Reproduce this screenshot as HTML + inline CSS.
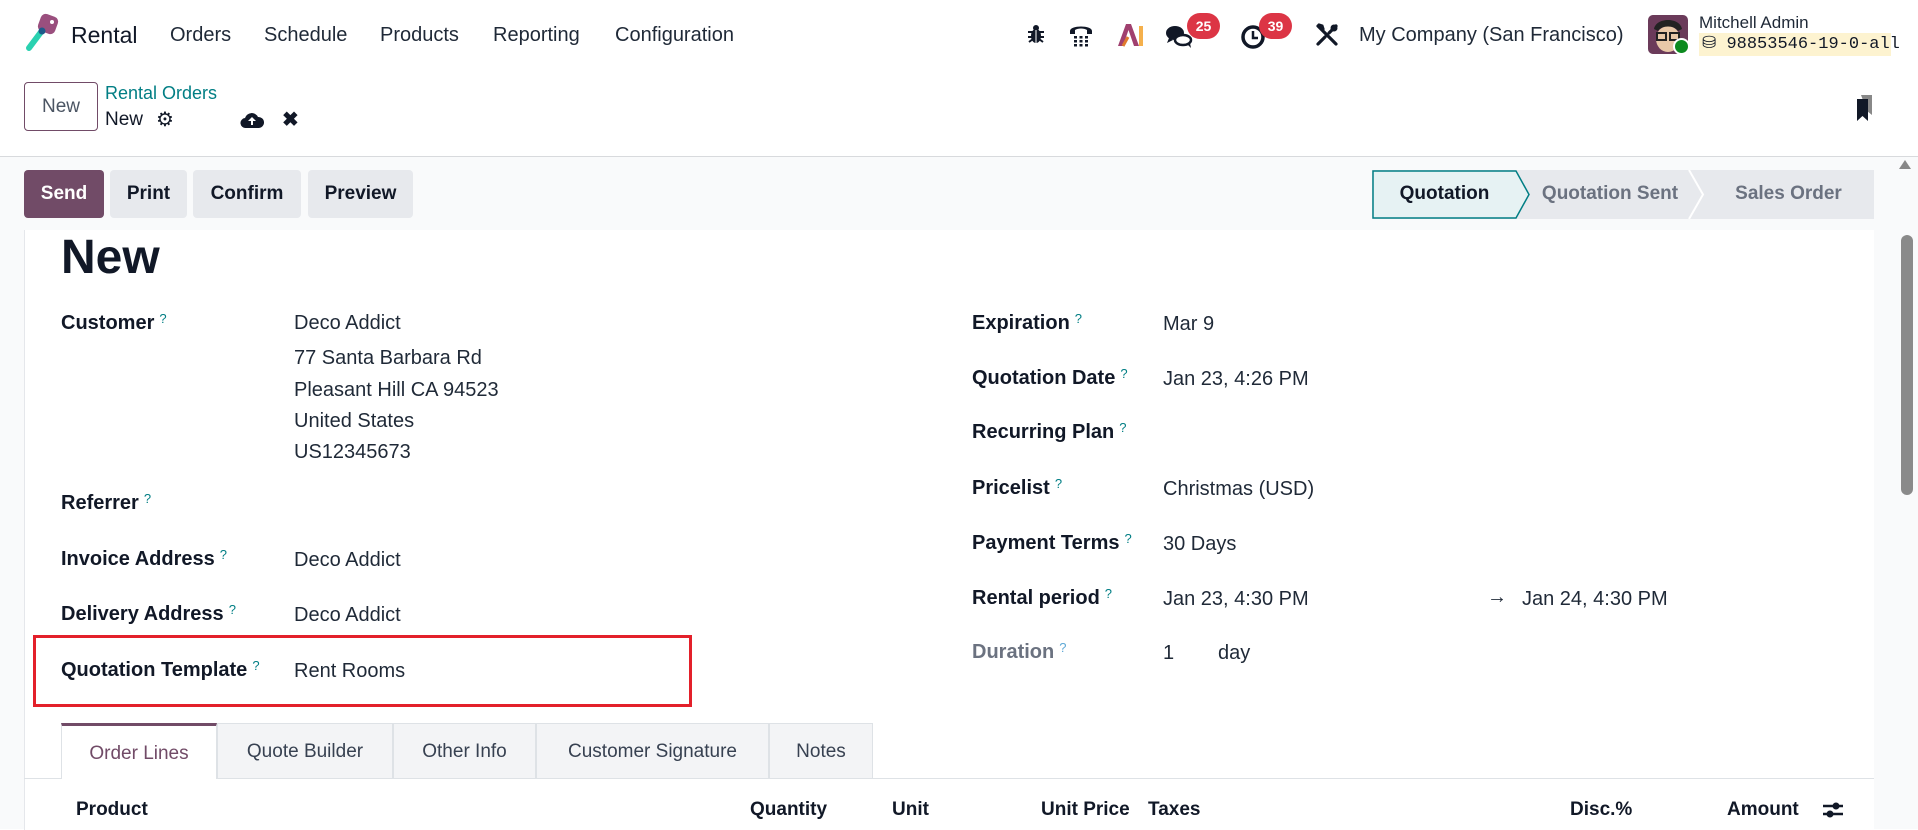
<!DOCTYPE html>
<html><head><meta charset="utf-8"><style>
*{margin:0;padding:0;box-sizing:border-box}
body{width:1918px;height:829px;overflow:hidden;background:#fff;font-family:"Liberation Sans",sans-serif;color:#1f2937;position:relative;font-size:20px}
.a{position:absolute;white-space:nowrap;line-height:24px}
.lb{font-weight:bold;color:#111827}
.q{color:#017e84;font-size:13px;vertical-align:top;position:relative;top:-4px;margin-left:5px;font-weight:normal}
.btn{position:absolute;top:170px;height:48px;border-radius:4px;background:#e7e9ed;font-weight:bold;color:#111827;text-align:center;line-height:48px;font-size:19px}
.th{position:absolute;top:798px;font-weight:bold;color:#111827;line-height:24px;font-size:19px}
.tab{position:absolute;top:723px;height:55px;border:1px solid #dee2e6;border-bottom:none;background:#f3f4f6;text-align:center;line-height:55px;font-size:19px;color:#374151}
</style></head><body>
<!-- top nav -->
<svg class="a" style="left:22px;top:12px" width="40" height="40" viewBox="0 0 40 40">
<rect x="17" y="3" width="18" height="18" rx="5" fill="#9a4f7e" transform="rotate(20 26 12)"/>
<line x1="19" y1="20" x2="7" y2="36" stroke="#2ad1b0" stroke-width="6" stroke-linecap="round"/>
<circle cx="20" cy="19" r="3.5" fill="#1e5a8a"/>
<circle cx="30" cy="10" r="2" fill="#fff"/>
</svg>
<div class="a" style="left:71px;top:23px;font-size:23px;color:#111827">Rental</div>
<div class="a" style="left:170px;top:23px">Orders</div>
<div class="a" style="left:264px;top:23px">Schedule</div>
<div class="a" style="left:380px;top:23px">Products</div>
<div class="a" style="left:493px;top:23px">Reporting</div>
<div class="a" style="left:615px;top:23px">Configuration</div>
<!-- icons -->
<svg class="a" style="left:1027px;top:24px" width="18" height="20" viewBox="0 0 18 20"><ellipse cx="9" cy="12" rx="5" ry="7" fill="#111827"/><circle cx="9" cy="4" r="3" fill="#111827"/><path d="M1 8h16M1 13h16M2 18l4-3M16 18l-4-3" stroke="#111827" stroke-width="2"/><line x1="9" y1="6" x2="9" y2="19" stroke="#fff" stroke-width="1"/></svg>
<svg class="a" style="left:1068px;top:22px" width="26" height="26" viewBox="0 0 26 26"><path d="M2 9c0-6 22-6 22 0v3h-5V8c-3-2-9-2-12 0v4H2z" fill="#111827"/><g fill="#111827"><rect x="6" y="14" width="3" height="2.5"/><rect x="11.5" y="14" width="3" height="2.5"/><rect x="17" y="14" width="3" height="2.5"/><rect x="6" y="18" width="3" height="2.5"/><rect x="11.5" y="18" width="3" height="2.5"/><rect x="17" y="18" width="3" height="2.5"/><rect x="6" y="22" width="3" height="2.5"/><rect x="11.5" y="22" width="3" height="2.5"/><rect x="17" y="22" width="3" height="2.5"/></g></svg>
<svg class="a" style="left:1117px;top:23px" width="28" height="24" viewBox="0 0 28 24"><path d="M1 23L9 1h5l8 22h-5L11.5 7 6 23z" fill="#a0406f"/><path d="M6 23l5-9" stroke="#e07a2e" stroke-width="3"/><rect x="22" y="3" width="4" height="20" fill="#f5b04c"/></svg>
<svg class="a" style="left:1165px;top:23px" width="30" height="26" viewBox="0 0 30 26"><ellipse cx="10" cy="10" rx="9" ry="7" fill="#111827"/><path d="M4 15l-2 5 6-3z" fill="#111827"/><ellipse cx="18" cy="17" rx="8" ry="5" fill="#fff" stroke="#111827" stroke-width="2.5"/><path d="M22 21l4 4-1-5z" fill="#111827"/></svg>
<div class="a" style="left:1187px;top:13px;width:33px;height:26px;border-radius:13px;background:#dc3545;color:#fff;font-size:14px;font-weight:bold;text-align:center;line-height:26px">25</div>
<svg class="a" style="left:1241px;top:24px" width="26" height="26" viewBox="0 0 26 26"><circle cx="12" cy="13" r="10" fill="none" stroke="#111827" stroke-width="3.5"/><path d="M12 7v7h5" stroke="#111827" stroke-width="2.5" fill="none"/></svg>
<div class="a" style="left:1259px;top:13px;width:33px;height:26px;border-radius:13px;background:#dc3545;color:#fff;font-size:14px;font-weight:bold;text-align:center;line-height:26px">39</div>
<svg class="a" style="left:1315px;top:23px" width="24" height="24" viewBox="0 0 24 24"><path d="M3 3l18 18M4 2l3 1 1 3" stroke="#111827" stroke-width="3.2" fill="none" stroke-linecap="round"/><path d="M21 3l-7 7M10 14l-7 7" stroke="#111827" stroke-width="3.2" stroke-linecap="round"/><circle cx="19" cy="5" r="3.5" fill="#111827"/></svg>
<div class="a" style="left:1359px;top:23px">My Company (San Francisco)</div>
<svg class="a" style="left:1648px;top:15px" width="40" height="39" viewBox="0 0 40 39"><rect width="40" height="39" rx="5" fill="#6b3b5a"/><ellipse cx="20" cy="24" rx="12" ry="13" fill="#e8c8a8"/><path d="M6 14c2-12 26-12 28 0l-4 2c-4-6-16-6-20 0z" fill="#222"/><rect x="9" y="18" width="9" height="7" fill="none" stroke="#222" stroke-width="2"/><rect x="22" y="18" width="9" height="7" fill="none" stroke="#222" stroke-width="2"/></svg>
<div class="a" style="left:1673px;top:38px;width:17px;height:17px;border-radius:50%;background:#0d8a1f;border:2px solid #fff"></div>
<div class="a" style="left:1699px;top:12px;font-size:17px;line-height:22px">Mitchell Admin</div>
<div class="a" style="left:1699px;top:33px;width:192px;height:23px;background:#fdf3d0;font-family:'Liberation Mono',monospace;font-size:17px;line-height:23px;padding-left:3px;color:#111827">⛁ 98853546-19-0-all</div>
<!-- control panel -->
<div class="a" style="left:24px;top:82px;width:74px;height:49px;border:1px solid #714b67;border-radius:4px;text-align:center;line-height:47px;font-size:19px;color:#4b5563">New</div>
<div class="a" style="left:105px;top:82px;font-size:18px;color:#017e84;line-height:22px">Rental Orders</div>
<div class="a" style="left:105px;top:109px;font-size:19px;color:#111827;line-height:22px">New</div>
<div class="a" style="left:156px;top:109px;font-size:20px;line-height:22px;color:#111827">⚙</div>
<svg class="a" style="left:240px;top:111px" width="24" height="18" viewBox="0 0 24 18"><path d="M6 17a5 5 0 0 1-1-10 7 7 0 0 1 13-1 5.5 5.5 0 0 1 1 11z" fill="#111827"/><path d="M12 6l-4 4h3v4h2v-4h3z" fill="#fff"/></svg>
<div class="a" style="left:282px;top:109px;font-size:20px;font-weight:bold;line-height:22px;color:#111827">✖</div>
<svg class="a" style="left:1856px;top:95px" width="18" height="28" viewBox="0 0 18 28"><path d="M5 0h11v20l-5-4" fill="#888"/><path d="M1 4h11v22l-5.5-5L1 26z" fill="#111827"/></svg>
<div class="a" style="left:0;top:156px;width:1918px;height:673px;background:#f9fafb;border-top:1px solid #d8dadd"></div>
<!-- buttons -->
<div class="btn" style="left:24px;width:80px;background:#714b67;color:#fff">Send</div>
<div class="btn" style="left:110px;width:77px">Print</div>
<div class="btn" style="left:193px;width:108px">Confirm</div>
<div class="btn" style="left:308px;width:105px">Preview</div>
<!-- statusbar -->
<svg class="a" style="left:1372px;top:170px" width="502" height="49" viewBox="0 0 502 49">
<rect x="0" y="0" width="502" height="49" fill="#e7e9ed"/>
<path d="M1 1H144L157 24.5L144 48H1Z" fill="#e6f2f3" stroke="#017e84" stroke-width="1.5"/>
<path d="M317 0L331 24.5L317 49" fill="none" stroke="#fff" stroke-width="2"/>
</svg>
<div class="a" style="left:1372px;top:182px;width:145px;text-align:center;font-weight:bold;color:#111827;font-size:19px">Quotation</div>
<div class="a" style="left:1530px;top:182px;width:160px;text-align:center;font-weight:bold;color:#6b7280;font-size:19px">Quotation Sent</div>
<div class="a" style="left:1703px;top:182px;width:171px;text-align:center;font-weight:bold;color:#6b7280;font-size:19px">Sales Order</div>
<!-- sheet -->
<div class="a" style="left:24px;top:230px;width:1850px;height:600px;background:#fff;border-left:1px solid #e5e7eb"></div>
<div class="a" style="left:61px;top:230px;font-size:48px;line-height:56px;font-weight:bold;color:#111827">New</div>
<div class="a lb" style="left:61px;top:311px">Customer<span class="q">?</span></div>
<div class="a" style="left:294px;top:311px">Deco Addict</div>
<div class="a" style="left:294px;top:346px">77 Santa Barbara Rd</div>
<div class="a" style="left:294px;top:378px">Pleasant Hill CA 94523</div>
<div class="a" style="left:294px;top:409px">United States</div>
<div class="a" style="left:294px;top:440px">US12345673</div>
<div class="a lb" style="left:61px;top:491px">Referrer<span class="q">?</span></div>
<div class="a lb" style="left:61px;top:547px">Invoice Address<span class="q">?</span></div>
<div class="a" style="left:294px;top:548px">Deco Addict</div>
<div class="a lb" style="left:61px;top:602px">Delivery Address<span class="q">?</span></div>
<div class="a" style="left:294px;top:603px">Deco Addict</div>
<div class="a lb" style="left:61px;top:658px">Quotation Template<span class="q">?</span></div>
<div class="a" style="left:294px;top:659px">Rent Rooms</div>
<div class="a" style="left:33px;top:635px;width:659px;height:72px;border:3px solid #e3202a"></div>
<!-- right column -->
<div class="a lb" style="left:972px;top:311px">Expiration<span class="q">?</span></div>
<div class="a" style="left:1163px;top:312px">Mar 9</div>
<div class="a lb" style="left:972px;top:366px">Quotation Date<span class="q">?</span></div>
<div class="a" style="left:1163px;top:367px">Jan 23, 4:26 PM</div>
<div class="a lb" style="left:972px;top:420px">Recurring Plan<span class="q">?</span></div>
<div class="a lb" style="left:972px;top:476px">Pricelist<span class="q">?</span></div>
<div class="a" style="left:1163px;top:477px">Christmas (USD)</div>
<div class="a lb" style="left:972px;top:531px">Payment Terms<span class="q">?</span></div>
<div class="a" style="left:1163px;top:532px">30 Days</div>
<div class="a lb" style="left:972px;top:586px">Rental period<span class="q">?</span></div>
<div class="a" style="left:1163px;top:587px">Jan 23, 4:30 PM</div>
<div class="a" style="left:1487px;top:585px;font-weight:bold">→</div>
<div class="a" style="left:1522px;top:587px">Jan 24, 4:30 PM</div>
<div class="a lb" style="left:972px;top:640px;color:#6b7280">Duration<span class="q" style="color:#5fa9d6">?</span></div>
<div class="a" style="left:1163px;top:641px">1</div>
<div class="a" style="left:1218px;top:641px">day</div>
<!-- tabs -->
<div class="a" style="left:24px;top:778px;width:1850px;height:1px;background:#dee2e6"></div>
<div class="tab" style="left:61px;width:156px;background:#fff;border-top:3px solid #714b67;color:#714b67;height:56px">Order Lines</div>
<div class="tab" style="left:217px;width:176px">Quote Builder</div>
<div class="tab" style="left:393px;width:143px">Other Info</div>
<div class="tab" style="left:536px;width:233px">Customer Signature</div>
<div class="tab" style="left:769px;width:104px">Notes</div>
<!-- table header -->
<div class="th" style="left:76px">Product</div>
<div class="th" style="left:750px">Quantity</div>
<div class="th" style="left:892px">Unit</div>
<div class="th" style="left:1041px">Unit Price</div>
<div class="th" style="left:1148px">Taxes</div>
<div class="th" style="left:1570px">Disc.%</div>
<div class="th" style="left:1727px">Amount</div>
<svg class="a" style="left:1822px;top:799px" width="22" height="22" viewBox="0 0 22 22"><path d="M1 7h20M1 15h20" stroke="#111827" stroke-width="2.5"/><circle cx="14" cy="7" r="3.5" fill="#111827"/><circle cx="8" cy="15" r="3.5" fill="#111827"/></svg>
<!-- scrollbar -->
<div class="a" style="left:1899px;top:160px;width:0;height:0;border-left:6px solid transparent;border-right:6px solid transparent;border-bottom:9px solid #888;left:1899px"></div>
<div class="a" style="left:1901px;top:235px;width:12px;height:260px;border-radius:6px;background:#8a8a8a"></div>
</body></html>
